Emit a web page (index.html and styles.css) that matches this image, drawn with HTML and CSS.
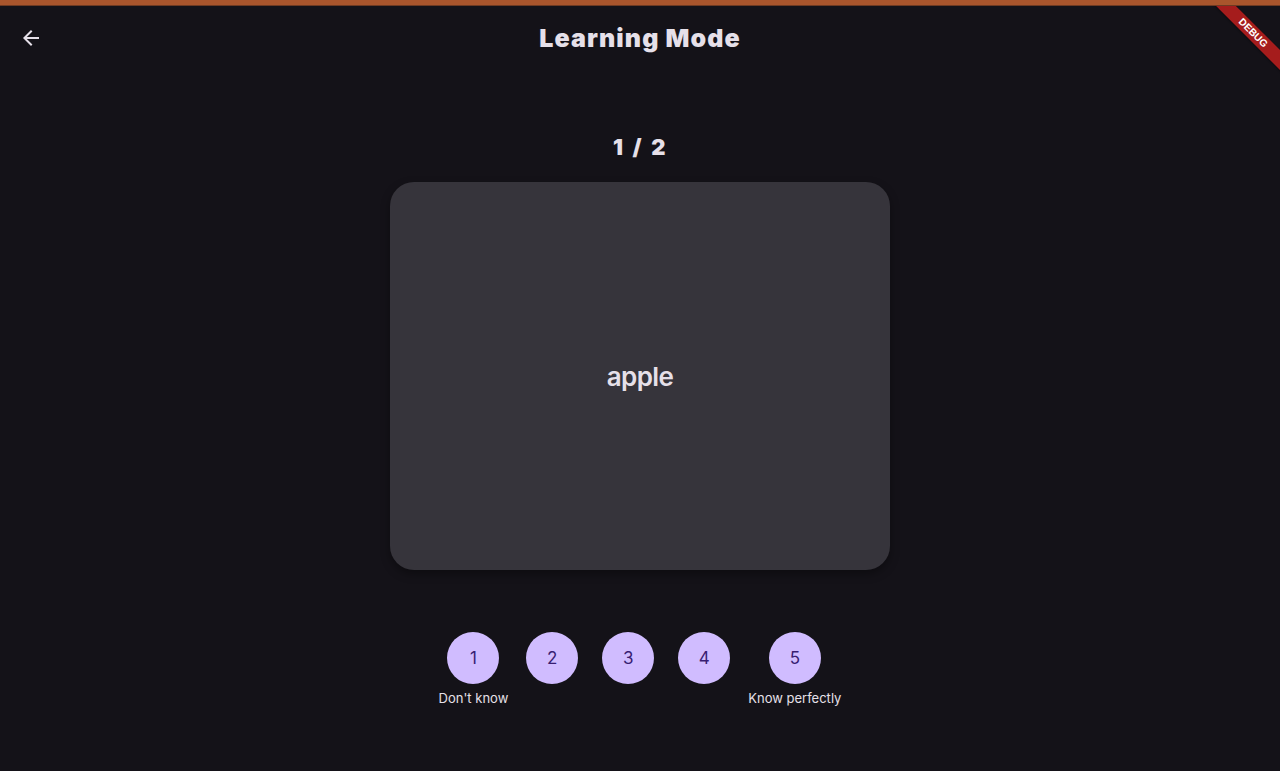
FILE: index.html
```html
<!DOCTYPE html>
<html>
<head>
<meta charset="utf-8">
<link rel="stylesheet" href="styles.css">
</head>
<body>
<div class="strip"></div>
<header class="appbar">
  <button class="back" aria-label="Back">
    <svg width="24" height="24" viewBox="0 0 24 24"><path d="M20 11H7.83l5.59-5.59L12 4l-8 8 8 8 1.41-1.41L7.83 13H20v-2z" fill="#e6e0e9"/></svg>
  </button>
  <h1 class="title">Learning Mode</h1>
</header>
<main class="content">
  <div class="progress">1 / 2</div>
  <div class="card"><span class="word">apple</span></div>
  <div class="ratings">
    <div class="rate"><div class="circle">1</div><div class="label">Don't know</div></div>
    <div class="rate"><div class="circle">2</div></div>
    <div class="rate"><div class="circle">3</div></div>
    <div class="rate"><div class="circle">4</div></div>
    <div class="rate"><div class="circle">5</div><div class="label">Know perfectly</div></div>
  </div>
</main>
<div class="debug"><span>DEBUG</span></div>
</body>
</html>
```
FILE: styles.css
```css
html, body {
  margin: 0;
  padding: 0;
}
body {
  width: 1280px;
  height: 771px;
  background: #141218;
  overflow: hidden;
  position: relative;
  font-family: Inter, "Noto Sans", sans-serif;
  color: #e6e0e9;
}
.strip {
  height: 6px;
  background: #a9552c;
  border-bottom: 1px solid #6e3a22;
  box-sizing: border-box;
  position: relative;
  z-index: 2;
}
.appbar {
  height: 64px;
  display: flex;
  align-items: center;
  justify-content: center;
  position: relative;
}
.back {
  position: absolute;
  left: 19px;
  top: 20px;
  width: 24px;
  height: 24px;
  padding: 0;
  border: 0;
  background: none;
  display: flex;
}
.title {
  margin: 0;
  font-size: 25px;
  font-weight: 900;
  letter-spacing: 1.1px;
  line-height: 28px;
  color: #e6e0e9;
}
.content {
  display: flex;
  flex-direction: column;
  align-items: center;
}
.progress {
  margin-top: 63px;
  font-size: 22px;
  font-weight: 900;
  letter-spacing: 1.6px;
  line-height: 28px;
  word-spacing: 2px;
}
.card {
  margin-top: 21px;
  width: 500px;
  height: 388px;
  border-radius: 24px;
  background: #36343b;
  box-shadow: 0 4px 10px rgba(0,0,0,0.35);
  display: flex;
  align-items: center;
  justify-content: center;
}
.word {
  font-size: 26px;
  font-weight: 600;
  letter-spacing: -0.6px;
}
.ratings {
  margin-top: 62px;
  display: flex;
  align-items: flex-start;
}
.rate {
  display: flex;
  flex-direction: column;
  align-items: center;
  padding: 0 9px;
}
.circle {
  width: 52px;
  height: 52px;
  margin: 0 3px;
  border-radius: 50%;
  background: #d0bcff;
  color: #381e72;
  font-size: 17px;
  display: flex;
  align-items: center;
  justify-content: center;
}
.label {
  margin: 6px -3px 0;
  font-size: 13px;
  line-height: 16px;
  white-space: nowrap;
  color: #e6e0e9;
}
.debug {
  position: absolute;
  top: 6px;
  right: 0;
  width: 90px;
  height: 90px;
  overflow: hidden;
  z-index: 1;
}
.debug span {
  position: absolute;
  left: 2.5px;
  top: 20px;
  width: 120px;
  height: 14px;
  background: #a51c1c;
  color: #fff;
  font-family: "Liberation Sans", sans-serif;
  font-weight: 700;
  font-size: 10px;
  line-height: 14px;
  text-align: center;
  transform: rotate(45deg);
  box-shadow: 0 1px 2px rgba(0,0,0,0.4);
}
```
